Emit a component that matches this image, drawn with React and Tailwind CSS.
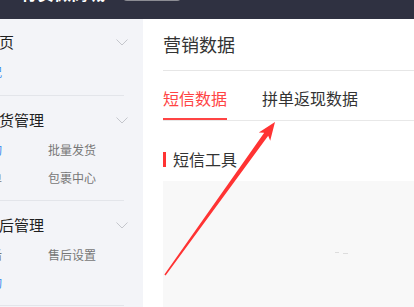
const font = { fontFamily: '"Noto Sans CJK SC", "Noto Sans", sans-serif' }

const groups = [
  { title: "首页", rows: [["概况", ""]], blue: [0] },
  { title: "发货管理", rows: [["订单查询", "批量发货"], ["快递打单", "包裹中心"]], blue: [0] },
  { title: "售后管理", rows: [["维权售后", "售后设置"], ["退款查询", ""]], blue: [1] },
]

const Chevron = () => (
  <svg width="12" height="7" viewBox="0 0 12 7" className="-mr-[4px]">
    <polyline points="0.5,0.5 6,6 11.5,0.5" fill="none" stroke="#c4c6cc" strokeWidth="1" />
  </svg>
)

const SideGroup = ({ group, first }) => (
  <div className={`mr-[19px] border-b border-[#e3e5ea] ${first ? "pt-[7px] pb-[9px]" : "pt-[8px] pb-[8px]"}`}>
    <div className="h-8 flex items-center justify-between">
      <span className="-ml-[16px] text-[15px] text-[#1f1f1f] whitespace-nowrap">{group.title}</span>
      <Chevron />
    </div>
    {group.rows.map((row, i) => (
      <div key={i} className="h-7 flex items-center text-[12px] whitespace-nowrap">
        <div className={`w-[2px] flex justify-end ${group.blue.includes(i) ? "text-[#3b8cf0]" : "text-[#777]"}`}>
          <span>{row[0]}</span>
        </div>
        <span className="ml-[46px] text-[#777]">{row[1]}</span>
      </div>
    ))}
  </div>
)

const App = () => {
  return (
    <div className="relative w-[414px] h-[307px] overflow-hidden bg-white" style={font}>
      <div className="h-[19px] bg-[#2f3141] flex items-start overflow-hidden">
        <div className="w-[14px] h-[14px] rounded-full bg-[#e33] -ml-[12px] -mt-[12px]"></div>
        <div className="ml-[18px] -mt-[16px] text-[17px] leading-[17px] font-bold text-white whitespace-nowrap">有赞微商城</div>
        <div className="ml-[18px] -mt-[13px] w-[58px] h-[14px] rounded bg-[#8c8d94]"></div>
      </div>
      <div className="flex h-[288px]">
        <div className="w-[143px] shrink-0 bg-[#f3f4f8] overflow-hidden">
          {groups.map((g, i) => (
            <SideGroup key={i} group={g} first={i === 0} />
          ))}
        </div>
        <div className="flex-1 pl-[20px] flex flex-col">
          <div className="h-[52px] flex items-center border-b border-[#e6e6e6] text-[18px] text-[#333]">
            营销数据
          </div>
          <div className="flex gap-[35px] border-b border-[#e8e8e8] text-[16px] leading-[22px]">
            <div className="pt-[16px] pb-[9px] border-b-2 border-[#f44] text-[#f44]">短信数据</div>
            <div className="pt-[16px] pb-[9px] border-b-2 border-transparent text-[#333]">拼单返现数据</div>
          </div>
          <div className="mt-[30px] flex items-center h-[16px]">
            <div className="w-[3px] h-[15px] bg-[#f33]"></div>
            <span className="ml-[7px] text-[16px] text-[#333]">短信工具</span>
          </div>
          <div className="mt-[14px] flex-1 bg-[#f8f8f8] flex items-start justify-start">
            <div className="mt-[71px] ml-[172px] flex gap-[4px]">
              <div className="w-[4px] h-px bg-[#ddd]"></div>
              <div className="w-[5px] h-px bg-[#ddd] mt-px"></div>
            </div>
          </div>
        </div>
      </div>
      <svg className="absolute left-0 top-0 pointer-events-none" width="414" height="307">
        <polygon
          points="275,122 270.2,140.7 268.2,135.7 165.6,275.5 164.4,274.5 264.2,132.7 258.8,132.5"
          fill="#f33"
        />
      </svg>
    </div>
  )
}

export default App
